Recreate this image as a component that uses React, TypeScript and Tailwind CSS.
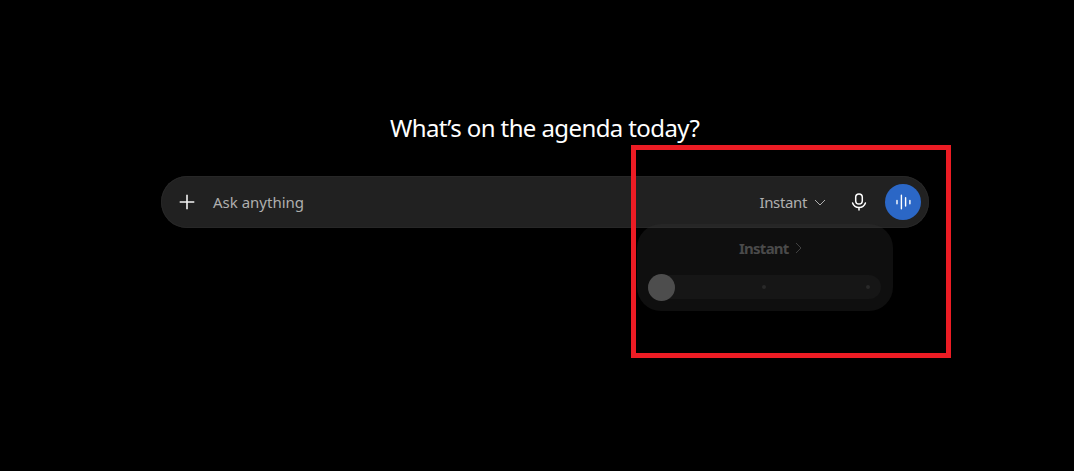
const MODE = 'Instant'

function PlusIcon() {
  return (
    <svg width="16" height="16" viewBox="0 0 16 16" fill="none" stroke="#f3f3f3" strokeWidth="1.6">
      <path d="M8 .7v14.6M.7 8h14.6" />
    </svg>
  )
}

function MicIcon() {
  return (
    <svg width="16" height="20" viewBox="0 0 16 20" fill="none" stroke="#fff" strokeWidth="1.5" strokeLinecap="round">
      <rect x="4.7" y="1.9" width="6.6" height="10.2" rx="3.3" />
      <path d="M1.6 10.9c1 2.9 3.4 4.6 6.4 4.6s5.4-1.7 6.4-4.6M8 15.7v2.4" />
    </svg>
  )
}

function VoiceIcon() {
  return (
    <svg width="16" height="16" viewBox="0 0 16 16" fill="none" stroke="#fff" strokeWidth="1.4" strokeLinecap="round">
      <path d="M2 6.4v3.4M6.4 1.2v13.6M10.6 3.8v8.2M14.9 6.4v3.4" />
    </svg>
  )
}

// Effort picker, shown half way through its fade in
function ModePopover() {
  return (
    <div className="absolute left-[476px] top-12 h-[87px] w-64 rounded-[24px] bg-[#333333]/30 pt-4">
      <div className="flex h-4 items-center pl-[102px]">
        <span className="text-[15px] font-bold leading-4 tracking-[-0.75px] text-[#4a4a4a]">{MODE}</span>
        <svg className="ml-1.5" width="7" height="12" viewBox="0 0 7 12" fill="none" stroke="#414141">
          <path d="M1 1l5 5-5 5" />
        </svg>
      </div>
      <div className="ml-[11px] mt-[19px] flex h-6 w-[233px] items-center justify-between rounded-full bg-[#161616] pr-[11px]">
        <span className="size-[27px] rounded-full bg-[#4d4d4d]" />
        <span className="ml-[-13px] size-1 rounded-full bg-[#292929]" />
        <span className="size-1 rounded-full bg-[#292929]" />
      </div>
    </div>
  )
}

export default function App() {
  return (
    <main className="relative h-[471px] w-[1074px] overflow-hidden bg-black pt-[112px] font-['Noto_Sans',sans-serif]">
      <h1 className="ml-[390px] h-8 whitespace-nowrap text-[24px] leading-8 tracking-[-0.6px] text-white">
        What’s on the agenda today?
      </h1>

      <div className="relative ml-[161px] mt-8 flex h-[52px] w-[768px] items-center rounded-full bg-[#212121] pl-[18px] pr-2 shadow-[inset_0_0_0_1px_#272727]">
        <button type="button" aria-label="Add">
          <PlusIcon />
        </button>
        <span className="ml-[18px] flex-1 text-[15px] leading-6 text-[#afafaf]">Ask anything</span>
        <button type="button" className="flex items-center text-[15px] leading-6 text-[#afafaf]">
          <span className="tracking-[-0.35px]">{MODE}</span>
          <svg className="ml-[7px]" width="12" height="7" viewBox="0 0 12 7" fill="none" stroke="#afafaf">
            <path d="M1 1l5 5 5-5" />
          </svg>
        </button>
        <button type="button" aria-label="Dictate" className="ml-[25px]">
          <MicIcon />
        </button>
        <button type="button" aria-label="Voice" className="ml-[18px] flex size-9 items-center justify-center rounded-full bg-[#2b67c6]">
          <VoiceIcon />
        </button>
        <ModePopover />
      </div>

      {/* Highlight frame */}
      <div className="pointer-events-none absolute left-[631px] top-[145px] h-[213px] w-80 border-5 border-[#ec1c24]" />
    </main>
  )
}
